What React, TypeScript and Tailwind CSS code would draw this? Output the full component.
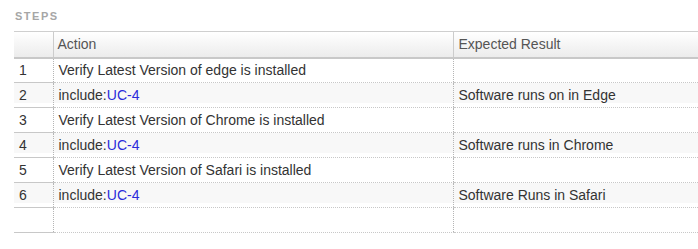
import React from "react";

type Row = { n: string; action: React.ReactNode; expected: string };

const Link = () => <span className="text-[#2b2bdb]">UC-4</span>;

const rows: Row[] = [
  { n: "1", action: "Verify Latest Version of edge is installed", expected: "" },
  { n: "2", action: <>include:<Link /></>, expected: "Software runs on in Edge" },
  { n: "3", action: "Verify Latest Version of Chrome is installed", expected: "" },
  { n: "4", action: <>include:<Link /></>, expected: "Software runs in Chrome" },
  { n: "5", action: "Verify Latest Version of Safari is installed", expected: "" },
  { n: "6", action: <>include:<Link /></>, expected: "Software Runs in Safari" },
  { n: "", action: "", expected: "" },
];

export default function App() {
  return (
    <div
      className="w-[698px] h-[249px] overflow-hidden bg-white"
      style={{ fontFamily: '"Liberation Sans", Arial, sans-serif' }}
    >
      <div className="pl-[15px] pt-[11px] h-[31px]">
        <div className="text-[11px] font-bold tracking-[1.5px] leading-[10px] text-[#a6a6a6]">STEPS</div>
      </div>
      <div className="pl-[14px]">
        <table className="w-[700px] border-collapse table-fixed text-[14px] text-[#333]">
          <colgroup>
            <col className="w-[39px]" />
            <col className="w-[400px]" />
            <col />
          </colgroup>
          <thead>
            <tr className="h-[26px] bg-[linear-gradient(to_bottom,#ffffff,#ebebeb)]">
              <th className="border-t border-t-[#cfcfcf] border-b-2 border-b-[#c8c8c8] p-0"></th>
              <th className="border-t border-t-[#cfcfcf] border-b-2 border-b-[#c8c8c8] border-l border-l-[#cccccc] text-left font-normal text-[#555] pl-[4px] p-0">
                Action
              </th>
              <th className="border-t border-t-[#cfcfcf] border-b-2 border-b-[#c8c8c8] border-l border-l-[#cccccc] text-left font-normal text-[#555] pl-[5px] p-0">
                Expected Result
              </th>
            </tr>
          </thead>
          <tbody>
            {rows.map((r, i) => {
              const striped = i % 2 === 1;
              const bg = striped
                ? "bg-[linear-gradient(to_bottom,#f8f8f8_20px,#ffffff_20px)]"
                : "bg-white";
              return (
                <tr key={i} className={`h-[25px] ${bg}`}>
                  <td className="border-b border-b-[#c8c8c8] pl-[5px] p-0 align-middle">{r.n}</td>
                  <td className="border-b border-b-[#c8c8c8] border-l border-dotted border-l-[#b5b5b5] pl-[5px] p-0 align-middle whitespace-nowrap">
                    {r.action}
                  </td>
                  <td className="border-b border-b-[#c8c8c8] border-l border-dotted border-l-[#b5b5b5] pl-[5px] p-0 align-middle whitespace-nowrap">
                    {r.expected}
                  </td>
                </tr>
              );
            })}
          </tbody>
        </table>
      </div>
    </div>
  );
}
